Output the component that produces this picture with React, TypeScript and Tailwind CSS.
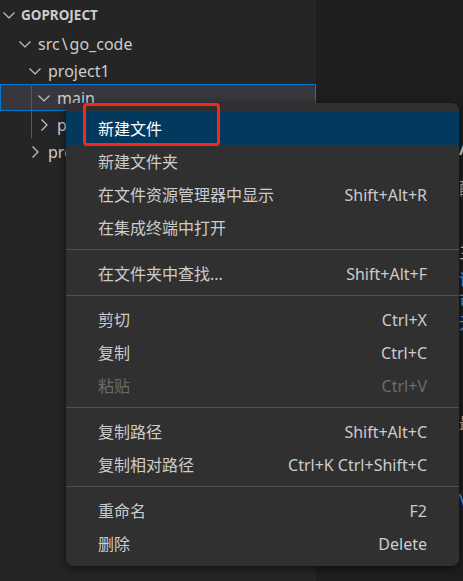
import React from 'react';

type MenuEntry =
  | { type: 'item'; label: string; shortcut?: string; disabled?: boolean; active?: boolean }
  | { type: 'sep' };

const menu: MenuEntry[] = [
  { type: 'item', label: '新建文件', active: true },
  { type: 'item', label: '新建文件夹' },
  { type: 'item', label: '在文件资源管理器中显示', shortcut: 'Shift+Alt+R' },
  { type: 'item', label: '在集成终端中打开' },
  { type: 'sep' },
  { type: 'item', label: '在文件夹中查找...', shortcut: 'Shift+Alt+F' },
  { type: 'sep' },
  { type: 'item', label: '剪切', shortcut: 'Ctrl+X' },
  { type: 'item', label: '复制', shortcut: 'Ctrl+C' },
  { type: 'item', label: '粘贴', shortcut: 'Ctrl+V', disabled: true },
  { type: 'sep' },
  { type: 'item', label: '复制路径', shortcut: 'Shift+Alt+C' },
  { type: 'item', label: '复制相对路径', shortcut: 'Ctrl+K Ctrl+Shift+C' },
  { type: 'sep' },
  { type: 'item', label: '重命名', shortcut: 'F2' },
  { type: 'item', label: '删除', shortcut: 'Delete' },
];

const font = { fontFamily: '"Noto Sans", "Noto Sans CJK SC", sans-serif' };

function ChevronDown() {
  return (
    <svg width="16" height="16" viewBox="0 0 16 16" fill="none">
      <path d="M2.5 5.5 8 11l5.5-5.5" stroke="#c5c5c5" strokeWidth="1.2" />
    </svg>
  );
}

function ChevronRight() {
  return (
    <svg width="16" height="16" viewBox="0 0 16 16" fill="none">
      <path d="M5.5 2.5 11 8l-5.5 5.5" stroke="#c5c5c5" strokeWidth="1.2" />
    </svg>
  );
}

function TreeRow({
  indent,
  open,
  label,
  selected,
  guide,
}: {
  indent: string;
  open: boolean;
  label: React.ReactNode;
  selected?: boolean;
  guide?: boolean;
}) {
  return (
    <div
      className={`relative flex h-[27px] items-center text-[16px] text-[#cccccc] ${indent} ${
        selected ? 'bg-[#37373d] outline outline-1 -outline-offset-1 outline-[#0078d4]' : ''
      }`}
    >
      {guide && <div className="absolute left-[31px] top-0 h-full w-px bg-[#585858]" />}
      <span className="flex w-4 justify-center">{open ? <ChevronDown /> : <ChevronRight />}</span>
      <span className="ml-[5px] leading-none">{label}</span>
    </div>
  );
}

export default function App() {
  return (
    <div className="relative flex h-[581px] w-[463px] overflow-hidden bg-[#1e1e1e]" style={font}>
      {/* Explorer sidebar */}
      <aside className="w-[316px] shrink-0 bg-[#252526]">
        <div className="flex h-[30px] items-center pl-px">
          <span className="flex w-4 justify-center">
            <ChevronDown />
          </span>
          <span className="ml-1 text-[13.5px] font-bold text-[#cccccc]">GOPROJECT</span>
        </div>
        <TreeRow
          indent="pl-[17px]"
          open
          label={
            <>
              src<span className="mx-[2px]">\</span>go_code
            </>
          }
        />
        <TreeRow indent="pl-[27px]" open label="project1" />
        <TreeRow indent="pl-[36px]" open label="main" selected guide />
        <TreeRow indent="pl-[36px]" open={false} label="p" guide />
        <TreeRow indent="pl-[27px]" open={false} label="pro" />
      </aside>

      {/* Editor, mostly hidden behind the menu */}
      <main className="flex-1 pl-[143px] text-[#cccccc]">
        <div className="mt-[132px] text-[26px] leading-none text-[#d4d4d4]">A</div>
        <div className="mt-[22px] text-[17px] leading-none text-[#c8a28a]">配</div>
        <div className="mt-[48px] text-[16px] leading-none">三</div>
        <div className="mt-[10px] text-[16px] leading-none text-[#3794ff]">详</div>
        <div className="mt-[6px] text-[16px] leading-none text-[#3794ff]">可</div>
        <div className="mt-[6px] text-[16px] leading-none text-[#3794ff]">无</div>
        <div className="mt-[84px] text-[16px] leading-none text-[#c8a28a]">最</div>
        <div className="mt-[60px] text-[18px] leading-none text-[#3794ff]">V</div>
      </main>

      {/* Context menu */}
      <div className="absolute left-[66px] top-[103px] w-[393px] rounded-[7px] bg-[#303030] pb-[6px] pt-[9px] shadow-[0_2px_8px_rgba(0,0,0,0.6)]">
        {menu.map((m, i) =>
          m.type === 'sep' ? (
            <div key={i} className="h-[13px] pt-[5px]">
              <div className="h-px bg-[#505050]" />
            </div>
          ) : (
            <div
              key={i}
              className={`flex h-[33px] items-center justify-between px-8 text-[16px] ${
                m.active
                  ? 'bg-[#04395e] text-white'
                  : m.disabled
                    ? 'text-[#6b6b6b]'
                    : 'text-[#cccccc]'
              }`}
            >
              <span>{m.label}</span>
              {m.shortcut && <span>{m.shortcut}</span>}
            </div>
          )
        )}
      </div>

      {/* Red annotation box */}
      <div className="absolute left-[83px] top-[103px] h-[43px] w-[137px] rounded-[4px] border-[3px] border-[#f5281c]" />
    </div>
  );
}
